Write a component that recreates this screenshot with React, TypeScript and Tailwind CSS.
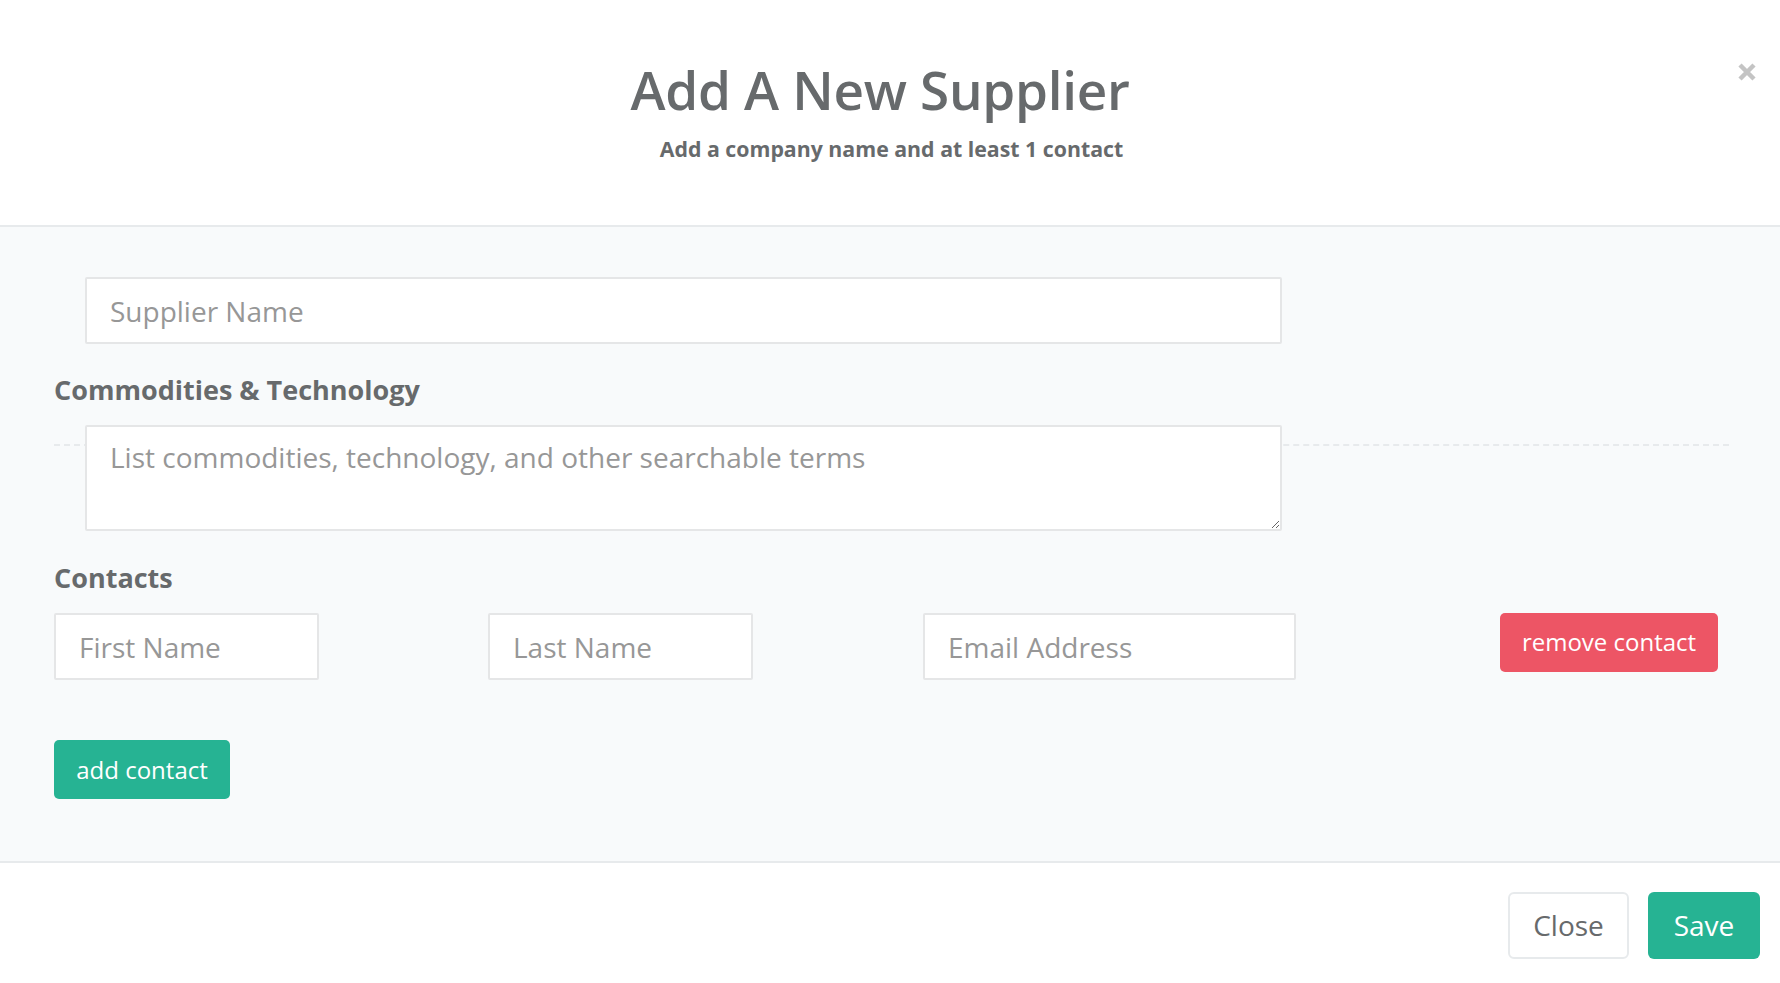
import React from "react";

export default function App() {
  const inputCls =
    "h-[67px] border-2 border-[#e5e6e7] bg-white pl-[23px] pr-[21px] text-[28px] text-[#676a6c] placeholder:text-[#979797] outline-none rounded-[2px]";
  return (
    <div className="w-[1780px] h-[983px] bg-white font-['Open_Sans',sans-serif] text-[#676a6c] flex flex-col overflow-hidden">
      {/* Header */}
      <div className="relative h-[227px] shrink-0 border-b-2 border-[#e7eaec] flex flex-col items-center">
        <h1 className="mt-[57px] mr-[20px] text-[53px] leading-[66px] font-semibold text-[#676a6c] tracking-[-0.3px]">
          Add A New Supplier
        </h1>
        <p className="mt-[12px] ml-[3px] text-[21.3px] leading-[28px] font-bold text-[#676a6c]">
          Add a company name and at least 1 contact
        </p>
        <button className="absolute right-[23px] top-[62px] w-[20px] h-[20px] flex items-center justify-center">
          <svg width="20" height="20" viewBox="0 0 20 20">
            <path d="M3 3 L17 17 M17 3 L3 17" stroke="#c4c4c4" strokeWidth="4.5" strokeLinecap="butt" />
          </svg>
        </button>
      </div>

      {/* Body */}
      <div className="bg-[#f8fafb] h-[634px] shrink-0 pl-[54px] pr-[51px] pt-[50px] flex flex-col">
        <input className={`${inputCls} ml-[31px] w-[1197px]`} placeholder="Supplier Name" />
        <label className="mt-[28px] text-[27px] leading-[36px] font-bold text-[#676a6c]">
          Commodities &amp; Technology
        </label>
        <div className="relative mt-[17px]">
          <div className="absolute left-0 right-0 top-[19px] border-t-2 border-dashed border-[#e7eaec]" />
          <textarea
            className="relative block ml-[31px] w-[1197px] h-[106px] border-2 border-[#e5e6e7] bg-white pl-[23px] pr-[21px] pt-[11px] text-[28px] leading-[38px] text-[#676a6c] placeholder:text-[#979797] outline-none rounded-[2px] resize-y"
            placeholder="List commodities, technology, and other searchable terms"
          />
        </div>
        <label className="mt-[29px] text-[27px] leading-[36px] font-bold text-[#676a6c]">Contacts</label>
        <div className="mt-[17px] flex items-start">
          <input className={`${inputCls} w-[265px]`} placeholder="First Name" />
          <input className={`${inputCls} ml-[169px] w-[265px]`} placeholder="Last Name" />
          <input className={`${inputCls} ml-[170px] w-[373px]`} placeholder="Email Address" />
          <button className="ml-[204px] w-[218px] h-[59px] rounded-[5px] bg-[#ed5565] text-white text-[24px] leading-none pb-[2px]">
            remove contact
          </button>
        </div>
        <div className="mt-[60px]">
          <button className="w-[176px] h-[59px] rounded-[5px] bg-[#26b393] text-white text-[24px] leading-none">
            add contact
          </button>
        </div>
      </div>

      {/* Footer */}
      <div className="border-t-2 border-[#e7eaec] flex-1 bg-white flex justify-end items-start pt-[29px] pr-[20px] gap-[19px]">
        <button className="w-[121px] h-[67px] rounded-[6px] border-2 border-[#e7eaec] bg-white text-[28px] text-[#676a6c] pb-[2px]">
          Close
        </button>
        <button className="w-[112px] h-[67px] rounded-[6px] bg-[#26b393] text-white text-[28px] pb-[2px]">
          Save
        </button>
      </div>
    </div>
  );
}
